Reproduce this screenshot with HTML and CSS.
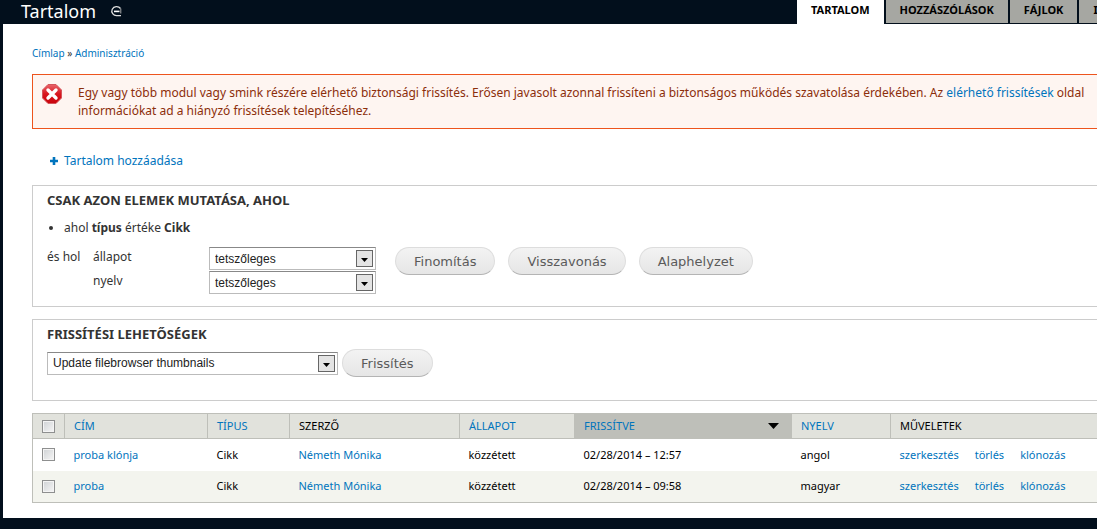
FILE: index.html
```
<!DOCTYPE html>
<html lang="hu">
<head>
    <meta charset="UTF-8">
    <title>Tartalom</title>
    <link rel="stylesheet" href="styles.css">
</head>
<body>
<header id="branding">
    <h1>Tartalom</h1>
    <a class="shortcut" href="#" aria-label="Tartalom">
        <svg width="12" height="12" viewBox="0 0 12 12">
            <path d="M10.500 3.500A4.800 4.500 0 1 0 7 10.600h4" fill="none" stroke="#ddd" stroke-width="1.300"/>
            <path d="M4 6.400h5.500" fill="none" stroke="#fff" stroke-width="1.600"/>
            <path d="M10.800 3.500v5" fill="none" stroke="#aaa" stroke-width="1"/>
        </svg>
    </a>
    <nav class="tabs">
        <a class="active" href="#">Tartalom</a>
        <a href="#">Hozzászólások</a>
        <a href="#">Fájlok</a>
        <a href="#">I</a>
    </nav>
</header>
<main id="page">
    <nav class="breadcrumb"><a href="#">Címlap</a> » <a href="#">Adminisztráció</a></nav>

    <div class="message error">
        <svg width="20" height="20" viewBox="0 0 20 20">
            <defs>
                <linearGradient id="red" x1="0" y1="0" x2="0" y2="1">
                    <stop offset="0" stop-color="#e8646a"/>
                    <stop offset=".5" stop-color="#d8161e"/>
                    <stop offset="1" stop-color="#c8040c"/>
                </linearGradient>
            </defs>
            <path d="M6 .5h8L19.500 6v8L14 19.500H6L.5 14V6z" fill="url(#red)" stroke="#d4545a" stroke-width="1"/>
            <path d="M6 6l8 8M14 6l-8 8" stroke="#fff" stroke-width="3.400" stroke-linecap="round"/>
        </svg>
        <p>Egy vagy több modul vagy smink részére elérhető biztonsági frissítés. Erősen javasolt azonnal frissíteni a biztonságos működés szavatolása érdekében. Az <a href="#">elérhető frissítések</a> oldal<br>
        információkat ad a hiányzó frissítések telepítéséhez.</p>
    </div>

    <a class="add" href="#">
        <svg width="8" height="8" viewBox="0 0 8 8"><path d="M4 0v8M0 4h8" stroke="#0074bd" stroke-width="2.600"/></svg>
        Tartalom hozzáadása
    </a>

    <form class="panel filter">
        <h2>Csak azon elemek mutatása, ahol</h2>
        <ul>
            <li>ahol <strong>típus</strong> értéke <strong>Cikk</strong></li>
        </ul>
        <div class="filters">
            <span class="and">és hol</span>
            <div class="fields">
                <label for="status">állapot</label>
                <select id="status"><option>tetszőleges</option></select>
                <label for="language">nyelv</label>
                <select id="language"><option>tetszőleges</option></select>
            </div>
            <div class="buttons">
                <button type="button">Finomítás</button>
                <button type="button">Visszavonás</button>
                <button type="button">Alaphelyzet</button>
            </div>
        </div>
    </form>

    <form class="panel update">
        <h2>Frissítési lehetőségek</h2>
        <div class="operation">
            <select aria-label="Frissítési lehetőségek"><option>Update filebrowser thumbnails</option></select>
            <button type="button">Frissítés</button>
        </div>
    </form>

    <table>
        <colgroup>
            <col class="c-check"><col class="c-title"><col class="c-type"><col class="c-author">
            <col class="c-status"><col class="c-changed"><col class="c-lang"><col>
        </colgroup>
        <thead>
            <tr>
                <th><input type="checkbox" aria-label="Összes"></th>
                <th><a href="#">Cím</a></th>
                <th><a href="#">Típus</a></th>
                <th>Szerző</th>
                <th><a href="#">Állapot</a></th>
                <th class="sorted"><a href="#">Frissítve <svg width="11" height="6" viewBox="0 0 11 6"><path d="M0 0h11L5.500 6z"/></svg></a></th>
                <th><a href="#">Nyelv</a></th>
                <th>Műveletek</th>
            </tr>
        </thead>
        <tbody>
            <tr>
                <td><input type="checkbox" aria-label="proba klónja"></td>
                <td><a href="#">proba klónja</a></td>
                <td>Cikk</td>
                <td><a href="#">Németh Mónika</a></td>
                <td>közzétett</td>
                <td>02/28/2014 – 12:57</td>
                <td>angol</td>
                <td><div class="links"><a href="#">szerkesztés</a><a href="#">törlés</a><a href="#">klónozás</a></div></td>
            </tr>
            <tr>
                <td><input type="checkbox" aria-label="proba"></td>
                <td><a href="#">proba</a></td>
                <td>Cikk</td>
                <td><a href="#">Németh Mónika</a></td>
                <td>közzétett</td>
                <td>02/28/2014 – 09:58</td>
                <td>magyar</td>
                <td><div class="links"><a href="#">szerkesztés</a><a href="#">törlés</a><a href="#">klónozás</a></div></td>
            </tr>
        </tbody>
    </table>
</main>
</body>
</html>
```
FILE: styles.css
```
*{
    box-sizing: border-box;
    margin: 0;
    padding: 0;
}
body{
    background: #020f1c;
    color: #333;
    font: 12px/18px "Noto Sans", "Open Sans", sans-serif;
    overflow: hidden;
}
a{
    color: #0074bd;
    text-decoration: none;
}
#branding{
    display: flex;
    height: 24px;
    padding-left: 21px;
}
#branding h1{
    color: #fff;
    font-size: 18px;
    font-weight: normal;
    line-height: 22px;
}
.shortcut{
    margin: 5px auto 0 14px;
    height: 12px;
}
.shortcut svg{
    display: block;
}
.tabs{
    display: flex;
    flex: 0 0 300px;
    gap: 2px;
    overflow: hidden;
}
.tabs a{
    flex: none;
    padding: 0 14px;
    background: #a6a7a2;
    color: #000;
    font-size: 11px;
    font-weight: bold;
    line-height: 19px;
    text-transform: uppercase;
    border-bottom: 1px solid #020f1c;
}
.tabs .active{
    background: #fff;
    border-color: #fff;
}
#page{
    margin-left: 3px;
    padding: 20px 0 15px 29px;
    background: #fff;
}
.breadcrumb{
    font-size: 10px;
}
.message{
    display: flex;
    gap: 16px;
    margin-top: 12px;
    padding: 9px 0 8px 9px;
    border: 1px solid #ed541d;
    border-right: 0;
    background: #fef5f1;
    color: #8c2e0b;
    white-space: nowrap;
}
.message svg{
    flex: none;
}
.add{
    display: flex;
    align-items: center;
    gap: 6px;
    margin: 23px 0 15px 18px;
}
.panel{
    margin-bottom: 12px;
    padding: 5px 14px 12px;
    border: 1px solid #ccc;
    border-right: 0;
}
.panel h2{
    font-size: 13px;
    line-height: 18px;
    text-transform: uppercase;
}
.filter ul{
    margin: 10px 0 10px 17px;
}
.filters{
    display: flex;
}
.and{
    width: 46px;
    padding-top: 1px;
}
.fields{
    display: grid;
    grid-template-columns: 116px 167px;
    row-gap: 1px;
}
.fields label{
    padding-top: 1px;
}
.buttons{
    display: flex;
    gap: 13px;
    margin-left: 19px;
}
select{
    appearance: none;
    height: 23px;
    padding: 0 24px 0 5px;
    border: 1px solid #bbb;
    border-top-color: #888;
    border-radius: 0;
    background: #fff url("data:image/svg+xml,%3Csvg xmlns='http://www.w3.org/2000/svg' width='17' height='17'%3E%3Crect x='.5' y='.5' width='16' height='16' fill='%23e4e4e4' stroke='%23666'/%3E%3Cpath d='M5 8h7l-3.500 4z'/%3E%3C/svg%3E") no-repeat right 2px center;
    color: #222;
    font: 12px "Liberation Sans", Arial, sans-serif;
}
button{
    height: 28px;
    padding: 0 18px;
    border: 1px solid #ddd;
    border-bottom-color: #b4b4b4;
    border-radius: 14px;
    background: linear-gradient(#f3f3f3, #e6e6e6);
    color: #5a5a5a;
    font: 13px "DejaVu Sans", Verdana, sans-serif;
}
.update{
    padding-bottom: 23px;
}
.operation{
    display: flex;
    align-items: center;
    gap: 4px;
    margin-top: 6px;
}
.operation select{
    width: 291px;
}
table{
    width: 100%;
    table-layout: fixed;
    border-collapse: collapse;
    border: 1px solid #bebfb9;
    border-right: 0;
    color: #000;
    font-size: 11px;
}
.c-check{ width: 32px; }
.c-title{ width: 143px; }
.c-type{ width: 82px; }
.c-author{ width: 170px; }
.c-status{ width: 115px; }
.c-changed{ width: 217px; }
.c-lang{ width: 99px; }
th{
    height: 25px;
    padding: 0 9px;
    border: 1px solid #bebfb9;
    border-right: 0;
    background: #e1e2dc;
    font-weight: normal;
    text-align: left;
    text-transform: uppercase;
}
.sorted{
    background: #bebfb9;
}
.sorted a{
    display: flex;
    align-items: center;
    justify-content: space-between;
    padding-right: 3px;
}
td{
    height: 32px;
    padding: 0 9px;
}
tbody tr:nth-child(even){
    background: #f3f4ee;
}
.links{
    display: flex;
    gap: 16px;
}
input{
    appearance: none;
    display: block;
    width: 13px;
    height: 13px;
    border: 1px solid #8e8f8f;
    background: linear-gradient(135deg, #cfd2d5, #f6f6f6);
    box-shadow: inset 0 0 0 1px #f4f4f4;
}
```
